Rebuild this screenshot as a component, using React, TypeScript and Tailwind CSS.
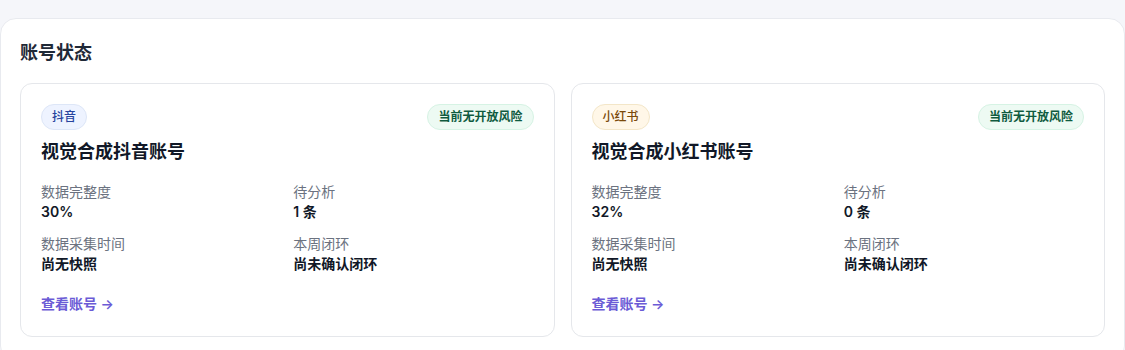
import React from "react";

type Acc = {
  platform: string;
  badgeCls: string;
  name: string;
  completeness: string;
  pending: string;
};

const accounts: Acc[] = [
  {
    platform: "抖音",
    badgeCls: "bg-[#eef3ff] border-[#dde6f7] text-[#27449e]",
    name: "视觉合成抖音账号",
    completeness: "30%",
    pending: "1 条",
  },
  {
    platform: "小红书",
    badgeCls: "bg-[#fff7e8] border-[#f3e6c8] text-[#7a4a0a]",
    name: "视觉合成小红书账号",
    completeness: "32%",
    pending: "0 条",
  },
];

function Stat({ label, value }: { label: string; value: string }) {
  return (
    <div className="flex flex-col">
      <span className="text-[14px] leading-5 text-[#6b7280]">{label}</span>
      <span className="text-[14px] leading-5 font-semibold text-[#111827]">{value}</span>
    </div>
  );
}

function Card({ a }: { a: Acc }) {
  return (
    <div className="rounded-xl border border-[#e5e7eb] bg-white px-5 pt-5 pb-[22px]">
      <div className="flex items-start justify-between">
        <span className={`rounded-full border px-2.5 py-1 text-[12px] leading-4 font-medium ${a.badgeCls}`}>
          {a.platform}
        </span>
        <span className="rounded-full border border-[#d6f3e4] bg-[#edfaf3] px-2.5 py-1 text-[12px] leading-4 font-semibold text-[#0f5b3f]">
          当前无开放风险
        </span>
      </div>
      <div className="mt-2 text-[18px] leading-7 font-semibold text-[#111827]">{a.name}</div>
      <div className="mt-4 grid grid-cols-2 gap-x-3 gap-y-3">
        <Stat label="数据完整度" value={a.completeness} />
        <Stat label="待分析" value={a.pending} />
        <Stat label="数据采集时间" value="尚无快照" />
        <Stat label="本周闭环" value="尚未确认闭环" />
      </div>
      <div className="mt-5 text-[14px] leading-5 font-semibold text-[#6b5bd6]">查看账号 →</div>
    </div>
  );
}

export default function App() {
  return (
    <div
      className="min-h-[350px] bg-[#f5f6fa] pt-[18px]"
      style={{ fontFamily: '"Inter", "Noto Sans CJK SC", sans-serif' }}
    >
      <div className="rounded-2xl border border-[#e8eaef] bg-white px-[19px] pt-5 pb-6">
        <h2 className="mb-4 text-[18px] leading-7 font-semibold text-[#1f2937]">账号状态</h2>
        <div className="grid grid-cols-2 gap-4">
          {accounts.map((a) => (
            <Card key={a.platform} a={a} />
          ))}
        </div>
      </div>
    </div>
  );
}
